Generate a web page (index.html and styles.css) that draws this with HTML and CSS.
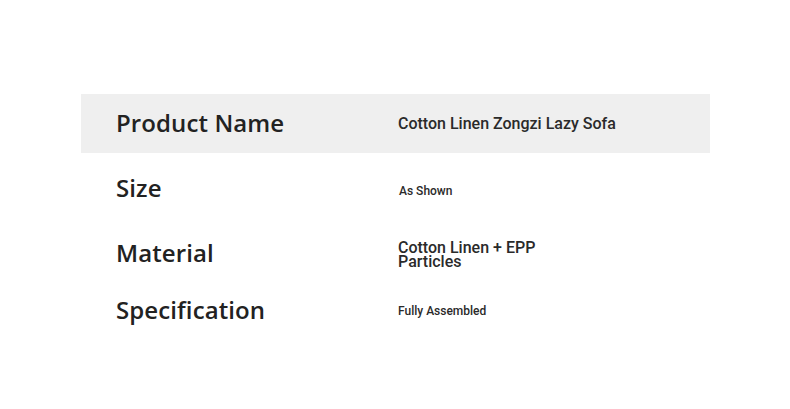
FILE: index.html
```html
<!DOCTYPE html>
<html>
<head>
<meta charset="utf-8">
<link rel="stylesheet" href="styles.css">
</head>
<body>
<div class="page">
  <div class="table">
    <div class="row row-head">
      <div class="label">Product Name</div>
      <div class="value">Cotton Linen Zongzi Lazy Sofa</div>
    </div>
    <div class="row row-size">
      <div class="label">Size</div>
      <div class="value small">As Shown</div>
    </div>
    <div class="row row-material">
      <div class="label">Material</div>
      <div class="value wrap">Cotton Linen + EPP Particles</div>
    </div>
    <div class="row row-spec">
      <div class="label">Specification</div>
      <div class="value small spec">Fully Assembled</div>
    </div>
  </div>
</div>
</body>
</html>
```
FILE: styles.css
```css
html, body {
  margin: 0;
  padding: 0;
  background: #ffffff;
}
.page {
  width: 790px;
  height: 409px;
  padding-top: 94px;
  padding-left: 81px;
  box-sizing: border-box;
}
.table {
  width: 629px;
  display: flex;
  flex-direction: column;
}
.row {
  display: grid;
  grid-template-columns: 317px 1fr;
  align-items: center;
}
.row-head {
  background: #efefef;
  height: 59px;
}
.row-size { height: 72px; }
.row-material { height: 58px; }
.row-spec { height: 56px; }
.label {
  padding-left: 35px;
  padding-bottom: 3px;
  font-family: "Open Sans", sans-serif;
  font-weight: 600;
  font-size: 24px;
  color: #222222;
  letter-spacing: 0.1px;
}
.value {
  font-family: Roboto, sans-serif;
  font-weight: 500;
  font-size: 16px;
  color: #2a2a2a;
}
.value.small {
  font-size: 12px;
  padding-left: 1px;
  padding-top: 3px;
}
.value.small.spec {
  padding-left: 0;
  padding-top: 0;
}
.value.wrap {
  width: 160px;
  line-height: 14px;
  padding-top: 2px;
}
```
